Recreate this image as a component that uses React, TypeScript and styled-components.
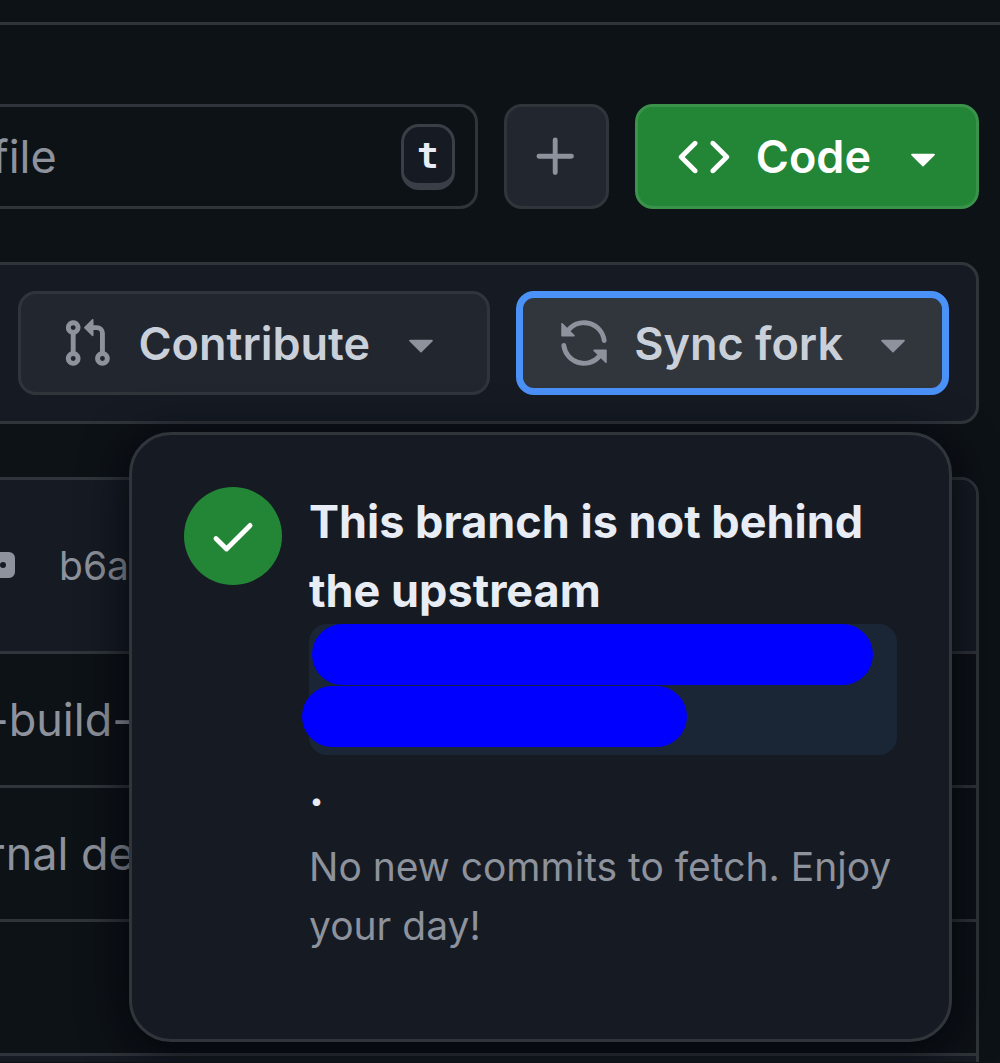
import React from "react";
import styled, { createGlobalStyle, css } from "styled-components";

const color = {
  canvas: "#0d1217",
  raised: "#161b23",
  line: "#30353b",
  control: "#22262e",
  controlActive: "#31363d",
  green: "#238636",
  focus: "#4a91f8",
  text: "#c9d0da",
  strong: "#e8ecf4",
  muted: "#8d929c",
};

const GlobalStyle = createGlobalStyle`
  *, *::before, *::after { box-sizing: border-box; }
  body {
    margin: 0;
    background: ${color.canvas};
    color: ${color.text};
    font-family: Inter, "Liberation Sans", sans-serif;
    font-size: 45px;
    line-height: 69px;
  }
  button, input { font: inherit; color: inherit; margin: 0; }
`;

const Page = styled.main`
  overflow: hidden;
  padding: 22px 21px 0 0;
`;

const Rule = styled.hr`
  height: 3px;
  margin: 0 -21px 79px 0;
  border: 0;
  background: ${color.line};
`;

const Toolbar = styled.div`
  display: flex;
  gap: 26px;
`;

const SearchBox = styled.label`
  display: flex;
  flex: 1;
  align-items: center;
  min-width: 0;
  height: 105px;
  margin-left: -24px;
  padding: 0 20px 0 13px;
  border: 3px solid ${color.line};
  border-radius: 18px;
`;

const SearchInput = styled.input`
  flex: 1;
  min-width: 0;
  padding: 0;
  border: 0;
  outline: 0;
  background: none;

  &::placeholder { color: ${color.muted}; opacity: 1; }
`;

const Key = styled.kbd`
  width: 54px;
  height: 66px;
  border: 3px solid #3a3e46;
  border-bottom-width: 7px;
  border-radius: 18px;
  background: ${color.raised};
  color: ${color.strong};
  font: bold 36px/58px "DejaVu Sans Mono", monospace;
  text-align: center;
`;

const Button = styled.button<{ $kind?: "primary" | "focused"; $wide?: boolean }>`
  display: flex;
  align-items: center;
  gap: 25px;
  height: 104px;
  padding: 0 ${(p) => (p.$wide ? 40 : 27)}px 0 40px;
  border: 3px solid ${color.line};
  border-radius: 18px;
  background: ${color.control};
  font-weight: 600;
  color: ${color.text};
  white-space: nowrap;

  ${(p) => p.$kind === "primary" && css`
    gap: 26px;
    height: 105px;
    border-color: #3b924b;
    background: ${color.green};
    color: #fff;
  `}
  ${(p) => p.$kind === "focused" && css`
    padding: 0 23px 0 35px;
    gap: 24px;
    border: 7px solid ${color.focus};
    background: ${color.controlActive};
  `}
`;

const SquareButton = styled(Button)`
  justify-content: center;
  width: 105px;
  height: 105px;
  padding: 0;
`;

const Icon = styled.svg<{ $bright?: boolean }>`
  flex: none;
  width: 52px;
  height: 52px;
  fill: ${(p) => (p.$bright ? "#fff" : color.muted)};
`;

const BranchBar = styled.section`
  display: flex;
  justify-content: flex-end;
  gap: 26px;
  margin: 53px 0 53px -24px;
  padding: 26px 27px;
  border: 3px solid ${color.line};
  border-radius: 18px;
  background: ${color.raised};
`;

const MenuAnchor = styled.div`
  position: relative;
`;

const Popover = styled.div`
  position: absolute;
  z-index: 1;
  top: calc(100% + 37px);
  right: -3px;
  display: flex;
  align-items: flex-start;
  gap: 27px;
  width: 823px;
  padding: 52px 52px 84px;
  border: 3px solid ${color.line};
  border-radius: 42px;
  background: ${color.raised};
  box-shadow: 0 8px 48px rgba(1, 4, 9, 0.85);
`;

const StatusCircle = styled.span`
  display: grid;
  flex: none;
  place-items: center;
  width: 98px;
  height: 98px;
  border-radius: 50%;
  background: ${color.green};
`;

const Message = styled.div`
  flex: 1;
  min-width: 0;
`;

const Title = styled.h2`
  margin: 0 0 13px;
  color: ${color.strong};
  font-size: 45px;
  font-weight: 700;
  line-height: 69px;
`;

const BranchName = styled.span`
  display: flex;
  flex-direction: column;
  gap: 1px;
  height: 131px;
  margin-top: -1px;
  border-radius: 18px;
  background: #1a2636;
`;

const Redaction = styled.span<{ $indent: number; $width: number }>`
  width: ${(p) => p.$width}px;
  height: 61px;
  margin-left: ${(p) => p.$indent}px;
  border-radius: 31px;
  background: #0000ff;
`;

const Note = styled.p`
  margin: 0;
  color: ${color.muted};
  font-size: 39px;
  line-height: 59px;
`;

const FilesFrame = styled.div`
  margin-left: -24px;
  border: 3px solid ${color.line};
  border-bottom: 0;
  border-radius: 18px 18px 0 0;
  overflow: hidden;
`;

const Files = styled.table`
  width: 100%;
  border-collapse: collapse;
  color: ${color.muted};
`;

const HeadCell = styled.th`
  height: 172px;
  padding: 0;
  background: ${color.raised};
  font-size: 39px;
  font-weight: 400;
  text-align: left;
`;

const HeadContent = styled.div`
  display: flex;
  align-items: center;
  gap: 44px;
`;

const Ellipsis = styled.svg`
  width: 36px;
  height: 26px;
  fill: ${color.muted};
`;

const Cell = styled.td`
  height: 134px;
  padding: 0 0 0 9px;
  border-top: 3px solid ${color.line};
`;

const FootCell = styled.td`
  height: 8px;
  padding: 0;
  border-top: 3px solid ${color.line};
  background: ${color.raised};
`;

const paths = {
  code: "m11.28 3.22 4.25 4.25a.75.75 0 0 1 0 1.06l-4.25 4.25a.749.749 0 0 1-1.275-.326.749.749 0 0 1 .215-.734L13.94 8l-3.72-3.72a.749.749 0 0 1 .326-1.275.749.749 0 0 1 .734.215Zm-6.56 0a.751.751 0 0 1 1.042.018.751.751 0 0 1 .018 1.042L2.06 8l3.72 3.72a.749.749 0 0 1-.326 1.275.749.749 0 0 1-.734-.215L.47 8.53a.75.75 0 0 1 0-1.06Z",
  plus: "M7.75 2a.75.75 0 0 1 .75.75V7h4.25a.75.75 0 0 1 0 1.5H8.5v4.25a.75.75 0 0 1-1.5 0V8.5H2.75a.75.75 0 0 1 0-1.5H7V2.75A.75.75 0 0 1 7.75 2Z",
  check: "M13.78 4.22a.75.75 0 0 1 0 1.06l-7.25 7.25a.75.75 0 0 1-1.06 0L2.22 9.28a.751.751 0 0 1 .018-1.042.751.751 0 0 1 1.042-.018L6 10.94l6.72-6.72a.75.75 0 0 1 1.06 0Z",
  triangle: "m4.427 7.427 3.396 3.396a.25.25 0 0 0 .354 0l3.396-3.396A.25.25 0 0 0 11.396 7H4.604a.25.25 0 0 0-.177.427Z",
  pull: "M1.5 3.25a2.25 2.25 0 1 1 3 2.122v5.256a2.251 2.251 0 1 1-1.5 0V5.372A2.25 2.25 0 0 1 1.5 3.25Zm5.677-.177L9.573.677A.25.25 0 0 1 10 .854V2.5h1A2.5 2.5 0 0 1 13.5 5v5.628a2.251 2.251 0 1 1-1.5 0V5a1 1 0 0 0-1-1h-1v1.646a.25.25 0 0 1-.427.177L7.177 3.427a.25.25 0 0 1 0-.354ZM3.75 2.5a.75.75 0 1 0 0 1.5.75.75 0 0 0 0-1.5Zm0 9.5a.75.75 0 1 0 0 1.5.75.75 0 0 0 0-1.5Zm8.25.75a.75.75 0 1 0 1.5 0 .75.75 0 0 0-1.5 0Z",
  sync: "M1.705 8.005a.75.75 0 0 1 .834.656 5.5 5.5 0 0 0 9.592 2.97l-1.204-1.204a.25.25 0 0 1 .177-.427h3.646a.25.25 0 0 1 .25.25v3.646a.25.25 0 0 1-.427.177l-1.38-1.38A7.002 7.002 0 0 1 1.05 8.84a.75.75 0 0 1 .656-.834ZM8 2.5a5.487 5.487 0 0 0-4.131 1.869l1.204 1.204A.25.25 0 0 1 4.896 6H1.25A.25.25 0 0 1 1 5.75V2.104a.25.25 0 0 1 .427-.177l1.38 1.38A7.002 7.002 0 0 1 14.95 7.16a.75.75 0 0 1-1.49.178A5.5 5.5 0 0 0 8 2.5Z",
};

function Glyph({ name, bright }: { name: keyof typeof paths; bright?: boolean }) {
  return (
    <Icon viewBox="0 0 16 16" aria-hidden="true" $bright={bright}>
      <path d={paths[name]} />
    </Icon>
  );
}

export default function App() {
  return (
    <Page>
      <GlobalStyle />
      <Rule />
      <Toolbar>
        <SearchBox>
          <SearchInput type="text" placeholder="file" />
          <Key>t</Key>
        </SearchBox>
        <SquareButton type="button" aria-label="Add file">
          <Glyph name="plus" />
        </SquareButton>
        <Button type="button" $kind="primary">
          <Glyph name="code" bright />
          Code
          <Glyph name="triangle" bright />
        </Button>
      </Toolbar>

      <BranchBar>
        <Button type="button" $wide>
          <Glyph name="pull" />
          Contribute
          <Glyph name="triangle" />
        </Button>
        <MenuAnchor>
          <Button type="button" $kind="focused" aria-expanded="true">
            <Glyph name="sync" />
            Sync fork
            <Glyph name="triangle" />
          </Button>
          <Popover>
            <StatusCircle>
              <Glyph name="check" bright />
            </StatusCircle>
            <Message>
              <Title>
                This branch is not behind the upstream
                <BranchName>
                  <Redaction $indent={3} $width={561} />
                  <Redaction $indent={-7} $width={385} />
                </BranchName>
                .
              </Title>
              <Note>No new commits to fetch. Enjoy your day!</Note>
            </Message>
          </Popover>
        </MenuAnchor>
      </BranchBar>

      <FilesFrame>
        <Files>
          <thead>
            <tr>
              <HeadCell scope="col">
                <HeadContent>
                  <Ellipsis viewBox="0 0 36 26" aria-hidden="true">
                    <path
                      fillRule="evenodd"
                      d="M6 0h24a6 6 0 0 1 6 6v14a6 6 0 0 1-6 6H6a6 6 0 0 1-6-6V6a6 6 0 0 1 6-6Zm2 10a3 3 0 1 0 0 6 3 3 0 0 0 0-6Zm8 0a3 3 0 1 0 0 6 3 3 0 0 0 0-6Zm8 0a3 3 0 1 0 0 6 3 3 0 0 0 0-6Z"
                    />
                  </Ellipsis>
                  b6a
                </HeadContent>
              </HeadCell>
            </tr>
          </thead>
          <tbody>
            <tr><Cell>-build-</Cell></tr>
            <tr><Cell>rnal de</Cell></tr>
            <tr><Cell /></tr>
            <tr><FootCell /></tr>
          </tbody>
        </Files>
      </FilesFrame>
    </Page>
  );
}
